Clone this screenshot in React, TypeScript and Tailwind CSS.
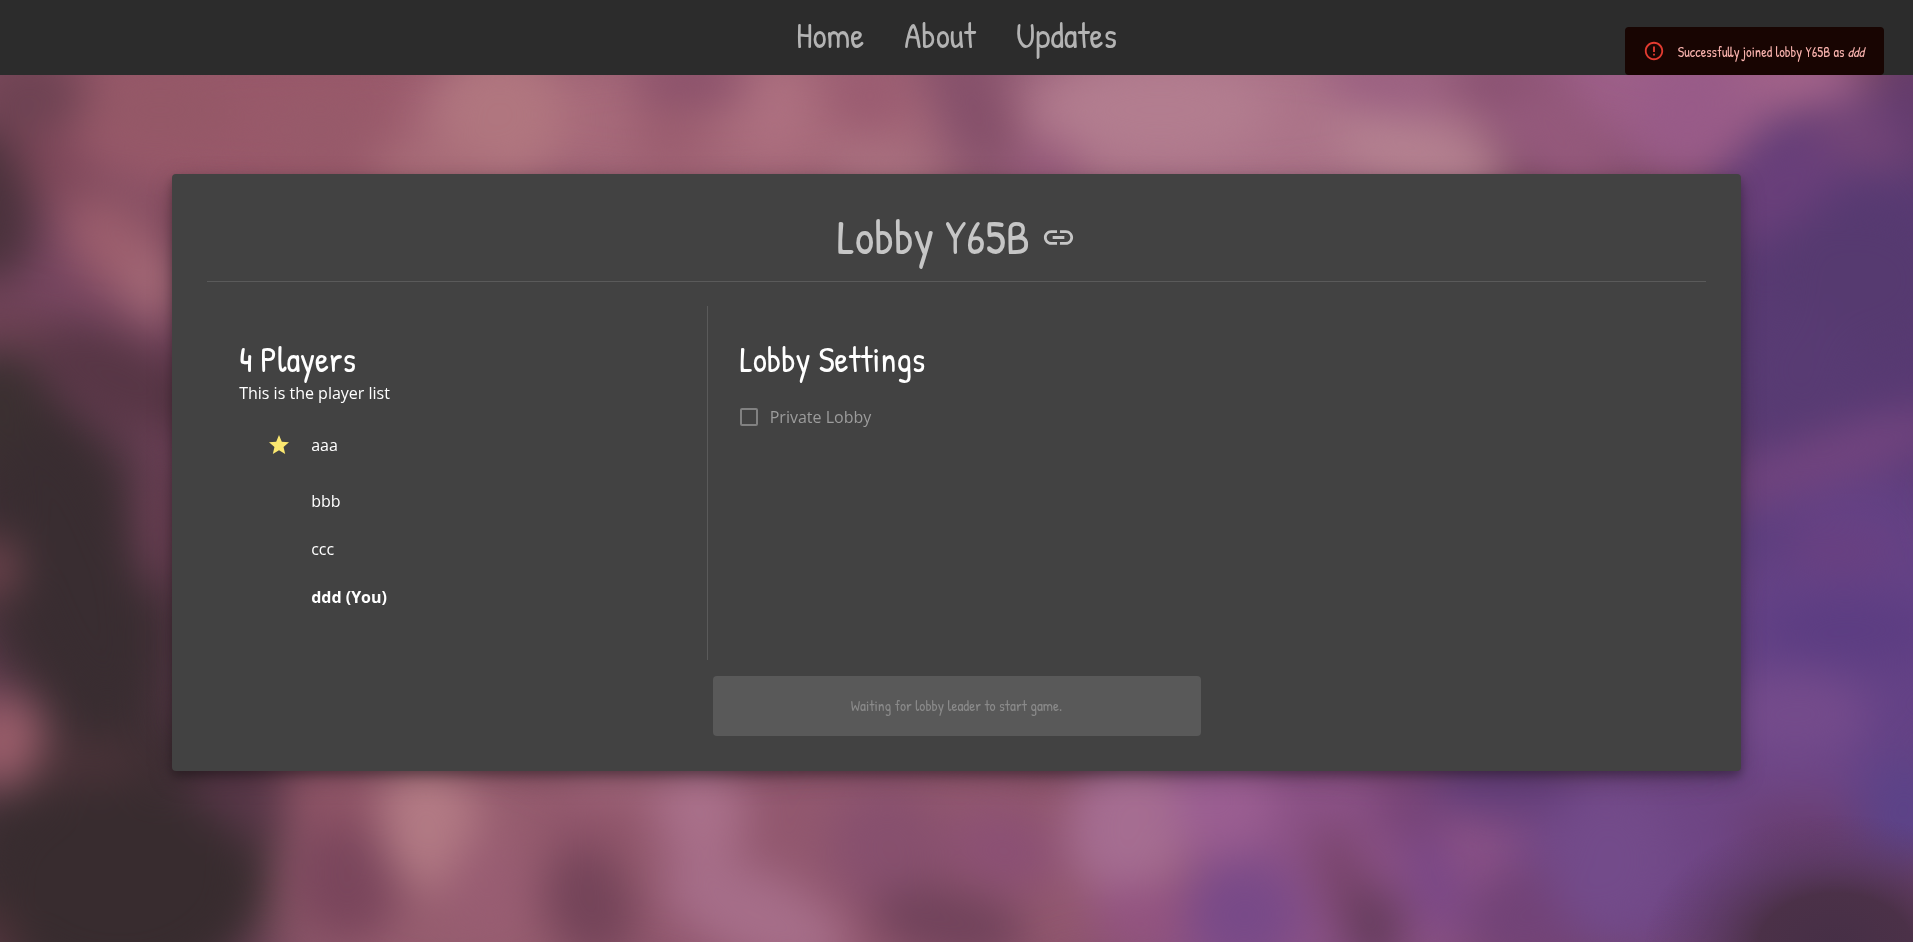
import { MdErrorOutline, MdLink, MdStar } from "react-icons/md";

type Blob = [cx: number, cy: number, rx: number, ry: number, angle: number, color: string];

const soft: Blob[] = [
  [300, 120, 340, 100, 0, "#99596a"],
  [700, 120, 300, 90, 0, "#a76a7a"],
  [1230, 120, 270, 100, 0, "#ac7489"],
  [1640, 80, 170, 90, 10, "#9d5f88"],
  [1850, 340, 160, 240, 0, "#583a73"],
  [1850, 640, 160, 180, 0, "#644286"],
  [1700, 850, 230, 120, 0, "#6f4685"],
  [1290, 870, 240, 150, 0, "#8b5286"],
  [850, 870, 330, 150, 0, "#92586f"],
  [450, 870, 200, 150, 0, "#965d6f"],
  [60, 560, 110, 210, -18, "#3a2d31"],
  [110, 860, 170, 150, 0, "#392d30"],
];

const detail: Blob[] = [
  [30, 95, 60, 45, 0, "#6e4353"],
  [-15, 205, 50, 80, -10, "#4a323c"],
  [60, 170, 60, 26, 40, "#7d4759"],
  [160, 110, 80, 40, 0, "#945867"],
  [130, 205, 60, 18, 35, "#875062"],
  [115, 250, 60, 36, 45, "#9c5e6d"],
  [155, 285, 30, 40, 0, "#a46976"],
  [20, 330, 80, 18, 15, "#6c4151"],
  [120, 380, 90, 44, 25, "#573645"],
  [160, 530, 24, 62, 0, "#6a3f53"],
  [0, 410, 44, 60, 0, "#3b3031"],
  [75, 570, 56, 150, -18, "#392d31"],
  [-4, 568, 20, 30, 0, "#7f4b56"],
  [4, 742, 42, 46, 10, "#9b5e6b"],
  [90, 765, 60, 26, 0, "#4b3339"],
  [0, 925, 12, 40, 0, "#63393f"],
  [320, 130, 60, 46, 0, "#975a6a"],
  [500, 115, 66, 66, 0, "#b0767f"],
  [430, 165, 60, 24, 0, "#a96e79"],
  [690, 80, 62, 26, 0, "#89506a"],
  [670, 140, 40, 40, 0, "#9b5e70"],
  [775, 110, 34, 50, 0, "#ad7080"],
  [870, 95, 44, 40, 0, "#9a5c71"],
  [975, 110, 40, 70, -20, "#85506a"],
  [1045, 175, 36, 30, -30, "#95597a"],
  [890, 170, 66, 22, 10, "#ac7482"],
  [1160, 110, 110, 50, 0, "#b27d8f"],
  [1390, 86, 70, 24, 10, "#985d80"],
  [1510, 85, 60, 28, 0, "#87506f"],
  [1560, 140, 70, 40, 50, "#94597b"],
  [1420, 155, 90, 34, 15, "#b48190"],
  [1690, 110, 50, 60, 20, "#985b88"],
  [1805, 76, 60, 24, 0, "#aa6890"],
  [1780, 185, 80, 40, -35, "#693f7a"],
  [1865, 135, 56, 34, 20, "#734577"],
  [1913, 90, 20, 60, 0, "#5f396f"],
  [1860, 280, 90, 76, 0, "#563a70"],
  [1800, 370, 60, 66, 0, "#583b73"],
  [1840, 455, 130, 24, -18, "#74457f"],
  [1770, 540, 46, 24, 0, "#5b3e7e"],
  [1840, 550, 60, 24, 0, "#694080"],
  [1850, 630, 90, 34, 0, "#5c3d82"],
  [1795, 715, 75, 45, 0, "#744b8b"],
  [1905, 810, 50, 60, 0, "#5c4388"],
  [1800, 830, 70, 26, 0, "#683e70"],
  [230, 800, 60, 46, 0, "#583748"],
  [120, 880, 130, 100, 0, "#382c2f"],
  [345, 880, 54, 66, -10, "#7a465c"],
  [330, 800, 50, 30, 10, "#8d5365"],
  [430, 825, 50, 66, -10, "#b27a84"],
  [490, 890, 44, 56, 0, "#985d72"],
  [590, 830, 50, 46, 0, "#8f556a"],
  [590, 905, 46, 60, -20, "#744459"],
  [700, 810, 46, 52, -25, "#a9708a"],
  [620, 780, 60, 20, 0, "#a0667a"],
  [755, 915, 100, 44, 25, "#a66e89"],
  [890, 850, 60, 66, -20, "#87506e"],
  [950, 925, 80, 38, 10, "#71435b"],
  [1005, 850, 54, 40, 20, "#8b5074"],
  [1130, 825, 62, 76, 10, "#a56d91"],
  [1225, 800, 50, 56, 0, "#9a5e91"],
  [1140, 915, 50, 32, 0, "#925380"],
  [1245, 915, 56, 54, -15, "#784a88"],
  [1345, 885, 22, 66, -18, "#764368"],
  [1375, 930, 30, 44, 0, "#653c5c"],
  [1410, 805, 38, 44, -15, "#784577"],
  [1500, 785, 74, 30, 0, "#623e7b"],
  [1435, 880, 22, 54, -15, "#774686"],
  [1530, 915, 64, 50, -20, "#724377"],
  [1610, 860, 64, 76, 0, "#734b8a"],
];

function Blobs({ items }: { items: Blob[] }) {
  return (
    <>
      {items.map(([cx, cy, rx, ry, angle, color], i) => (
        <ellipse key={i} cx={cx} cy={cy} rx={rx} ry={ry} fill={color} transform={`rotate(${angle} ${cx} ${cy})`} />
      ))}
    </>
  );
}

function Backdrop() {
  return (
    <svg
      aria-hidden="true"
      className="absolute inset-0 -z-10 h-full w-full"
      viewBox="0 0 1913 942"
      preserveAspectRatio="xMidYMid slice"
    >
      <defs>
        <filter id="wide" x="-20%" y="-20%" width="140%" height="140%" colorInterpolationFilters="sRGB">
          <feGaussianBlur stdDeviation="34" />
        </filter>
        <filter id="near" x="-20%" y="-20%" width="140%" height="140%" colorInterpolationFilters="sRGB">
          <feGaussianBlur stdDeviation="22" />
        </filter>
        <radialGradient id="corner">
          <stop offset="0" stopColor="#462f46" />
          <stop offset="0.4" stopColor="#4b3148" />
          <stop offset="1" stopColor="#5c3862" stopOpacity="0" />
        </radialGradient>
      </defs>
      <rect width="1913" height="942" fill="#774660" />
      <g filter="url(#wide)">
        <Blobs items={soft} />
      </g>
      <g filter="url(#near)">
        <Blobs items={detail} />
      </g>
      <ellipse cx="1835" cy="945" rx="190" ry="130" fill="url(#corner)" />
    </svg>
  );
}

const hand = "font-['Patrick_Hand','Lato',sans-serif]";

const links = ["Home", "About", "Updates"];

const players = [
  { name: "aaa", leader: true, you: false },
  { name: "bbb", leader: false, you: false },
  { name: "ccc", leader: false, you: false },
  { name: "ddd", leader: false, you: true },
];

export default function App() {
  return (
    <div className="relative isolate min-h-screen overflow-hidden font-['Segoe_UI','Open_Sans',sans-serif] text-base text-white">
      <Backdrop />

      <header className="flex h-[75px] items-center justify-center bg-[#2c2c2c] pb-1">
        <nav className={`flex gap-10 text-[35px] leading-[42px] text-[#b3b3b3] ${hand}`}>
          {links.map((link) => (
            <a key={link} href={`#${link.toLowerCase()}`}>
              {link}
            </a>
          ))}
        </nav>
      </header>

      <div
        role="alert"
        className={`absolute top-[27px] right-[29px] flex h-12 items-center gap-[13px] rounded bg-[#180502] pr-5 pl-[18px] text-sm text-[#fab3ae] ${hand}`}
      >
        <MdErrorOutline className="size-[22px] text-[#e23b30]" />
        <p className="pt-0.5">
          Successfully joined lobby Y65B as <em>ddd</em>
        </p>
      </div>

      <main className="mx-auto mt-[99px] w-[82%] rounded bg-[#424242] p-[35px] shadow-[0_5px_10px_rgba(0,0,0,0.25),0_8px_24px_rgba(0,0,0,0.25)]">
        <h1 className={`flex items-center justify-center gap-[11px] text-5xl leading-[56px] text-[#c6c6c6] ${hand}`}>
          Lobby Y65B
          <button type="button" aria-label="Copy lobby link">
            <MdLink className="size-[35px]" />
          </button>
        </h1>
        <hr className="mt-4 border-[#5a5a5a]" />

        <div className="mt-6 grid grid-cols-3">
          <section className="px-8 pt-[33px] pb-[31px]">
            <h2 className={`text-[35px] leading-[42px] ${hand}`}>{players.length} Players</h2>
            <p>This is the player list</p>
            <ul className="py-2 pl-7">
              {players.map((player) => (
                <li key={player.name} className={`flex items-center ${player.leader ? "h-16" : "h-12"}`}>
                  <span className="w-11">
                    {player.leader && <MdStar className="size-6 text-[#fbe870]" title="Lobby leader" />}
                  </span>
                  {player.you ? <strong>{player.name} (You)</strong> : player.name}
                </li>
              ))}
            </ul>
          </section>

          <section className="col-span-2 border-l border-[#5a5a5a] px-8 pt-[33px] pb-[31px]">
            <h2 className={`text-[35px] leading-[42px] ${hand}`}>Lobby Settings</h2>
            <label className="mt-4 flex h-10 items-center gap-3 text-[#9c9c9c]">
              <input
                type="checkbox"
                disabled
                className="size-[18px] appearance-none rounded-xs border-2 border-[#818181]"
              />
              Private Lobby
            </label>
          </section>
        </div>

        <button
          type="button"
          disabled
          className={`mx-auto mt-4 block h-[60px] w-[488px] max-w-full rounded bg-[#595959] text-[15px] text-[#8a8a8a] ${hand}`}
        >
          Waiting for lobby leader to start game.
        </button>
      </main>
    </div>
  );
}
